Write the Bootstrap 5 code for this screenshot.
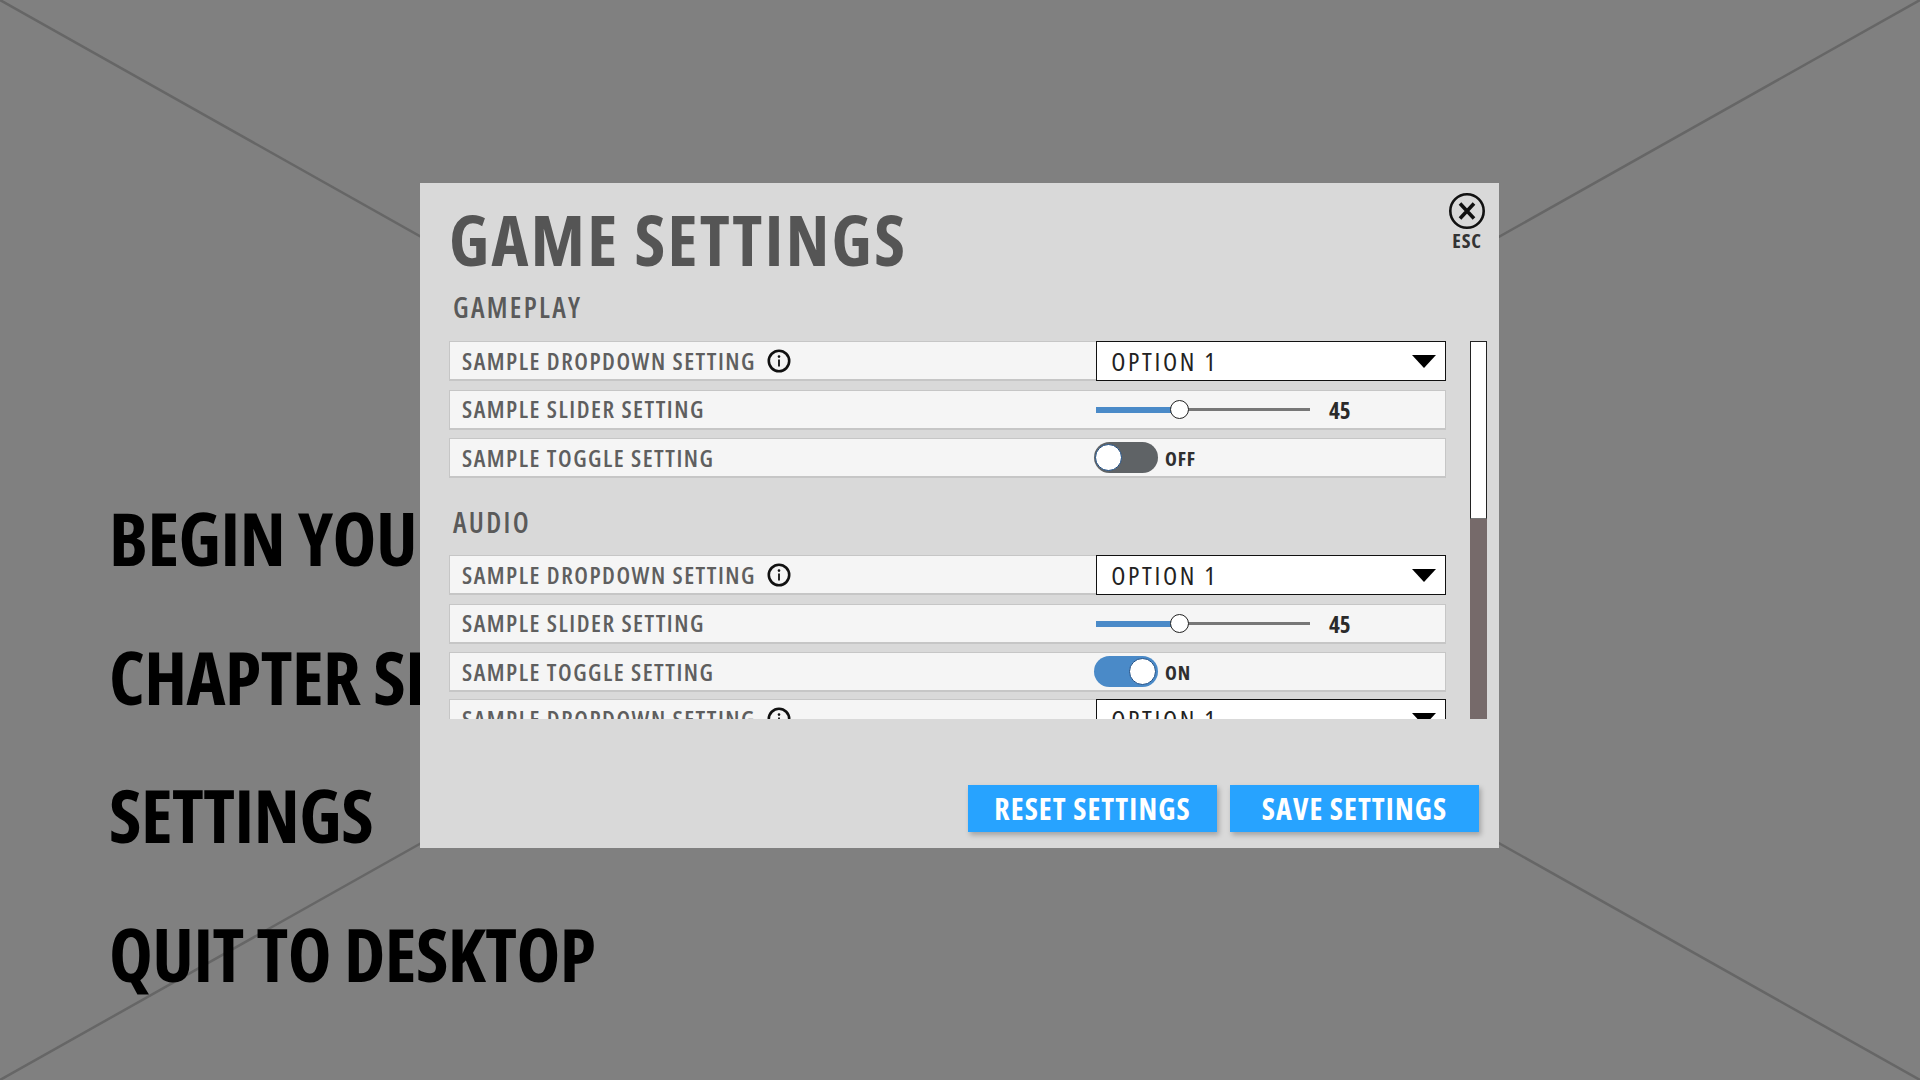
<!DOCTYPE html>
<html lang="en">
<head>
    <meta charset="UTF-8">
    <meta name="viewport" content="width=device-width, initial-scale=1.0">
    <title>Game Settings</title>
    <link href="https://cdn.jsdelivr.net/npm/bootstrap@5.3.2/dist/css/bootstrap.min.css" rel="stylesheet">
    <style>
        html, body {
            height: 100%;
            margin: 0;
        }
        body {
            background: #808080;
            overflow: hidden;
            font-family: "Open Sans", "Liberation Sans", sans-serif;
            font-stretch: 75%;
        }
        .game-stage {
            position: relative;
            width: 1920px;
            height: 1080px;
            overflow: hidden;
            padding: 487px 0 0 109px;
        }
        .stage-lines {
            position: absolute;
            left: 0;
            top: 0;
        }
        .main-menu {
            position: relative;
            gap: 37px;
        }
        .main-menu div {
            font-size: 74px;
            line-height: 101.5px;
            font-weight: 700;
            color: #000;
            white-space: nowrap;
            letter-spacing: -.5px;
        }
        .settings-panel {
            position: absolute;
            left: 420px;
            top: 183px;
            width: 1079px;
            height: 665px;
            padding: 0 12px 16px 29px;
            background: #d9d9d9;
        }
        .panel-head {
            height: 108px;
            padding-top: 16px;
        }
        .panel-title {
            margin: 0;
            font-size: 70px;
            line-height: 80px;
            font-weight: 700;
            color: #555;
            letter-spacing: 2.4px;
        }
        .close-box {
            width: 38px;
            margin: -7px 1px 0 0;
            font-size: 20px;
            line-height: 22px;
            font-weight: 700;
            color: #333;
            letter-spacing: .8px;
        }
        .section-name {
            font-size: 28px;
            line-height: 32px;
            font-weight: 600;
            color: #5a5a5a;
            padding-left: 4px;
            letter-spacing: 2.3px;
        }
        .gameplay-name {
            height: 50px;
        }
        .audio-name {
            height: 68.5px;
            padding-top: 19px;
        }
        .settings-area {
            height: 378px;
            overflow: hidden;
            gap: 24px;
        }
        .settings-list {
            width: 997px;
        }
        .setting-row {
            height: 40px;
            margin-bottom: 8.5px;
            background: #f5f5f5;
            border: 2px solid #c6c6c6;
            border-width: 1px 1px 2px 1px;
            font-size: 24px;
            font-weight: 600;
            color: #5f5f5f;
            letter-spacing: 1.5px;
            white-space: nowrap;
        }
        .tight-row {
            margin-bottom: 7px;
        }
        .row-label {
            width: 647px;
            padding-left: 12px;
        }
        .info-icon {
            margin-left: 11px;
        }
        .drop-box {
            width: 350px;
            height: 40px;
            margin: -1px -1px -2px 0;
            padding: 0 9px 0 14px;
            background: #fff;
            border: 1.5px solid #111;
            font-size: 26px;
            font-weight: 400;
            color: #222;
            letter-spacing: 2.6px;
        }
        .slider-track {
            position: relative;
            width: 214px;
            height: 3px;
            margin-left: -1px;
            background: #777;
        }
        .slider-fill {
            position: absolute;
            left: 0;
            top: -1px;
            height: 6px;
            background: #4a8ac8;
        }
        .slider-knob {
            position: absolute;
            top: -8px;
            margin-left: -9px;
            width: 19px;
            height: 19px;
            border-radius: 50%;
            background: #fff;
            border: 1.5px solid #222;
        }
        .small-value {
            font-size: 23px;
            font-weight: 700;
            color: #2a2a2a;
            margin-left: 19px;
            padding-top: 2px;
            letter-spacing: 0;
        }
        .toggle-pill {
            display: block;
            position: relative;
            width: 64px;
            height: 31px;
            margin-left: -3px;
            border-radius: 16px;
            background: #5f6366;
        }
        .toggle-pill::after {
            content: "";
            position: absolute;
            top: 2px;
            left: 1px;
            width: 27px;
            height: 27px;
            border-radius: 50%;
            background: #fff;
            border: 1.5px solid #1f4f86;
        }
        .toggle-on {
            background: #4a8ac8;
        }
        .toggle-on::after {
            left: 35px;
        }
        .toggle-text {
            font-size: 20px;
            font-weight: 700;
            color: #2f2f2f;
            margin-left: 7px;
            padding-top: 2px;
            letter-spacing: .8px;
        }
        .scroll-rail {
            width: 17px;
            background: #766a6a;
        }
        .scroll-thumb {
            height: 178px;
            background: #fff;
            border: 1px solid #222;
            border-bottom-color: #777;
        }
        .panel-buttons {
            gap: 13px;
            padding-right: 8px;
        }
        .panel-btn {
            width: 249px;
            height: 47px;
            padding: 0;
            border: 0;
            border-radius: 0;
            background: #27a3ff;
            color: #fff;
            font-size: 30px;
            font-stretch: 75%;
            font-weight: 700;
            line-height: 47px;
            letter-spacing: 1.1px;
            white-space: nowrap;
            box-shadow: 2px 3px 5px rgba(0, 0, 0, .25);
        }
        .panel-btn:hover {
            background: #27a3ff;
            color: #fff;
        }
    </style>
</head>
<body>
    <div class="game-stage">
        <svg class="stage-lines" width="1920" height="1080" viewBox="0 0 1920 1080">
            <path d="M0 0 L1920 1080 M1920 0 L0 1080" stroke="#666" stroke-width="2.5" fill="none"/>
        </svg>

        <div class="main-menu d-flex flex-column">
            <div>BEGIN YOUR JOURNEY</div>
            <div>CHAPTER SELECT</div>
            <div>SETTINGS</div>
            <div>QUIT TO DESKTOP</div>
        </div>

        <div class="settings-panel d-flex flex-column">
            <div class="panel-head d-flex justify-content-between">
                <h1 class="panel-title">GAME SETTINGS</h1>
                <div class="close-box d-flex flex-column align-items-center">
                    <svg width="38" height="38" viewBox="0 0 38 38">
                        <circle cx="19" cy="19" r="16.7" fill="none" stroke="#111" stroke-width="2.6"/>
                        <path d="M12 11.5 L26 26.5 M26 11.5 L12 26.5" stroke="#111" stroke-width="3.6" fill="none"/>
                    </svg>
                    <span>ESC</span>
                </div>
            </div>

            <div class="section-name gameplay-name">GAMEPLAY</div>

            <div class="settings-area d-flex">
                <div class="settings-list" id="settings-list"></div>
                <div class="scroll-rail"><div class="scroll-thumb"></div></div>
            </div>

            <div class="panel-buttons d-flex justify-content-end mt-auto">
                <button class="btn panel-btn" type="button">RESET SETTINGS</button>
                <button class="btn panel-btn" type="button">SAVE SETTINGS</button>
            </div>
        </div>
    </div>

    <script src="https://cdn.jsdelivr.net/npm/bootstrap@5.3.2/dist/js/bootstrap.bundle.min.js"></script>
    <script>
        const infoIcon = `<svg class="info-icon" width="24" height="24" viewBox="0 0 24 24">
            <circle cx="12" cy="12" r="10.2" fill="none" stroke="#111" stroke-width="2.6"/>
            <circle cx="12" cy="7.6" r="1.3" fill="#111"/>
            <path d="M12 10.5 V17.5" stroke="#111" stroke-width="1.8"/>
        </svg>`;
        const arrowIcon = `<svg width="24" height="13" viewBox="0 0 24 13"><path d="M0 0 H24 L12 13 Z" fill="#000"/></svg>`;

        function dropdownRow() {
            return `<div class="setting-row d-flex align-items-center">
                <div class="row-label d-flex align-items-center">SAMPLE DROPDOWN SETTING ${infoIcon}</div>
                <div class="drop-box d-flex align-items-center justify-content-between"><span>OPTION 1</span>${arrowIcon}</div>
            </div>`;
        }

        function sliderRow(value, fill) {
            return `<div class="setting-row d-flex align-items-center">
                <div class="row-label">SAMPLE SLIDER SETTING</div>
                <div class="slider-track">
                    <div class="slider-fill" style="width: ${fill}%"></div>
                    <div class="slider-knob" style="left: ${fill}%"></div>
                </div>
                <div class="small-value">${value}</div>
            </div>`;
        }

        function toggleRow(on, extraClass) {
            return `<div class="setting-row d-flex align-items-center ${extraClass}">
                <div class="row-label">SAMPLE TOGGLE SETTING</div>
                <span class="toggle-pill ${on ? 'toggle-on' : ''}"></span>
                <span class="toggle-text">${on ? 'ON' : 'OFF'}</span>
            </div>`;
        }

        document.getElementById('settings-list').innerHTML =
            dropdownRow() + sliderRow(45, 39) + toggleRow(false, '') +
            `<div class="section-name audio-name">AUDIO</div>` +
            dropdownRow() + sliderRow(45, 39) + toggleRow(true, 'tight-row') + dropdownRow();
    </script>
</body>
</html>
